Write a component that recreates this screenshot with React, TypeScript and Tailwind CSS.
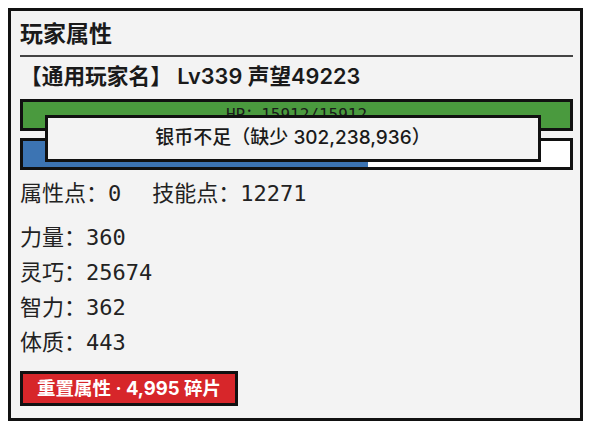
const SANS = "font-['Inter','Noto_Sans_CJK_SC',sans-serif]";
const MONO = "font-['DejaVu_Sans_Mono','Noto_Sans_CJK_SC',monospace]";

const attributes = [
  { label: "力量", value: "360" },
  { label: "灵巧", value: "25674" },
  { label: "智力", value: "362" },
  { label: "体质", value: "443" },
];

function StatBar({ color, percent, label }: { color: string; percent: number; label?: string }) {
  return (
    <div className="relative h-[32px] border-[3px] border-[#111] bg-white">
      <div className={`h-full ${color}`} style={{ width: `${percent}%` }} />
      {label && (
        <div className={`absolute inset-0 flex items-center justify-center text-[16px] text-[#1a1a1a] ${MONO}`}>
          {label}
        </div>
      )}
    </div>
  );
}

export default function App() {
  return (
    <div className="h-[428px] w-[597px] bg-white pl-[8px] pt-[8px]">
      <div className="h-[413px] w-[575px] border-[3px] border-[#111] bg-[#f3f3f3] pl-[9px] pr-[7px] pt-[8px] text-[#1a1a1a]">
        <h1 className={`text-[23px] font-bold leading-[30px] ${SANS}`}>玩家属性</h1>
        <div className="mt-[6px] h-[2px] bg-[#444]" />
        <p className={`mt-[4px] text-[21.7px] font-semibold leading-[30px] ${SANS}`}>
          【通用玩家名】 Lv339 声望49223
        </p>

        <div className="relative mt-[8px] flex flex-col gap-[7px]">
          <StatBar color="bg-[#4a9a3e]" percent={100} label="HP：15912/15912" />
          <StatBar color="bg-[#3c74b3]" percent={63} />
          {/* toast over the bars */}
          <div
            className={`absolute left-[25px] top-[16px] flex h-[47px] w-[496px] items-center justify-center border-[3px] border-[#111] bg-[#f3f3f3] text-[19px] font-medium ${SANS}`}
          >
            银币不足（缺少 302,238,936）
          </div>
        </div>

        <p className={`mt-[9px] text-[22px] leading-[30px] text-[#222] ${MONO}`}>
          属性点：0<span className="ml-[31px]">技能点：12271</span>
        </p>

        <ul className={`mt-[11px] text-[22px] leading-[35px] text-[#222] ${MONO}`}>
          {attributes.map((a) => (
            <li key={a.label}>
              {a.label}：{a.value}
            </li>
          ))}
        </ul>

        <button
          className={`mt-[11px] flex h-[35px] items-center border-[3px] border-[#111] bg-[#d7262a] px-[14px] text-[18.5px] font-bold leading-none text-white ${SANS}`}
        >
          重置属性 · 4,995 碎片
        </button>
      </div>
    </div>
  );
}
